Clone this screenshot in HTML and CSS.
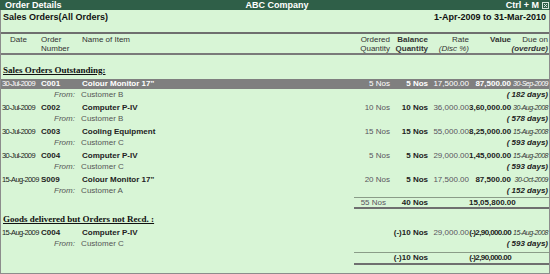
FILE: index.html
```html
<!DOCTYPE html>
<html lang="en">
<head>
    <meta charset="UTF-8">
    <title>Order Details</title>
    <link rel="stylesheet" href="styles.css">
</head>
<body>
    <div class="window">
        <div class="titlebar">
            <span class="tb-left">Order Details</span>
            <span class="tb-center">ABC Company</span>
            <span class="tb-right">Ctrl + M
                <span class="close-box">
                    <svg width="7" height="7" viewBox="0 0 7 7"><rect x="0.5" y="0.5" width="6" height="6" fill="none" stroke="#d6e6dc"/><path d="M2 2 L5 5 M5 2 L2 5" stroke="#d6e6dc" stroke-width="1"/></svg>
                </span>
            </span>
        </div>

        <div class="pane">
            <div class="subhead">
                <span>Sales Orders(All Orders)</span>
                <span>1-Apr-2009 to 31-Mar-2010</span>
            </div>

            <div class="row colhead">
                <div class="date-head">Date</div>
                <div>Order<br>Number</div>
                <div class="item">Name of Item</div>
                <div class="num">Ordered<br>Quantity</div>
                <div class="num bold">Balance<br>Quantity</div>
                <div class="num">Rate<br><i>(Disc %)</i></div>
                <div class="num bold">Value</div>
                <div class="num">Due on<br><b><i>(overdue)</i></b></div>
            </div>

            <div class="section">Sales Orders Outstanding:</div>

            <div class="entry">
                <div class="row main selected">
                    <div class="date">30-Jul-2009</div>
                    <div class="ono">C001</div>
                    <div class="item">Colour Monitor 17"</div>
                    <div class="num muted">5 Nos</div>
                    <div class="num bold">5 Nos</div>
                    <div class="num muted">17,500.00</div>
                    <div class="num bold">87,500.00</div>
                    <div class="num due">30-Sep-2009</div>
                </div>
                <div class="row sub">
                    <div class="from"><i>From:</i> Customer B</div>
                    <div class="days">( 182 days)</div>
                </div>
            </div>

            <div class="entry">
                <div class="row main">
                    <div class="date">30-Jul-2009</div>
                    <div class="ono">C002</div>
                    <div class="item">Computer P-IV</div>
                    <div class="num muted">10 Nos</div>
                    <div class="num bold">10 Nos</div>
                    <div class="num muted">36,000.00</div>
                    <div class="num bold">3,60,000.00</div>
                    <div class="num due">30-Aug-2008</div>
                </div>
                <div class="row sub">
                    <div class="from"><i>From:</i> Customer B</div>
                    <div class="days">( 578 days)</div>
                </div>
            </div>

            <div class="entry">
                <div class="row main">
                    <div class="date">30-Jul-2009</div>
                    <div class="ono">C003</div>
                    <div class="item">Cooling Equipment</div>
                    <div class="num muted">15 Nos</div>
                    <div class="num bold">15 Nos</div>
                    <div class="num muted">55,000.00</div>
                    <div class="num bold">8,25,000.00</div>
                    <div class="num due">15-Aug-2008</div>
                </div>
                <div class="row sub">
                    <div class="from"><i>From:</i> Customer C</div>
                    <div class="days">( 593 days)</div>
                </div>
            </div>

            <div class="entry">
                <div class="row main">
                    <div class="date">30-Jul-2009</div>
                    <div class="ono">C004</div>
                    <div class="item">Computer P-IV</div>
                    <div class="num muted">5 Nos</div>
                    <div class="num bold">5 Nos</div>
                    <div class="num muted">29,000.00</div>
                    <div class="num bold">1,45,000.00</div>
                    <div class="num due">15-Aug-2008</div>
                </div>
                <div class="row sub">
                    <div class="from"><i>From:</i> Customer C</div>
                    <div class="days">( 593 days)</div>
                </div>
            </div>

            <div class="entry last">
                <div class="row main">
                    <div class="date">15-Aug-2009</div>
                    <div class="ono">S009</div>
                    <div class="item">Colour Monitor 17"</div>
                    <div class="num muted">20 Nos</div>
                    <div class="num bold">5 Nos</div>
                    <div class="num muted">17,500.00</div>
                    <div class="num bold">87,500.00</div>
                    <div class="num due">30-Oct-2009</div>
                </div>
                <div class="row sub">
                    <div class="from"><i>From:</i> Customer A</div>
                    <div class="days">( 152 days)</div>
                </div>
            </div>

            <div class="totals">
                <div class="num muted pad">55 Nos</div>
                <div class="num bold">40 Nos</div>
                <div></div>
                <div class="num bold">15,05,800.00</div>
                <div></div>
            </div>

            <div class="section second">Goods delivered but Orders not Recd. :</div>

            <div class="entry last">
                <div class="row main">
                    <div class="date">15-Aug-2009</div>
                    <div class="ono">C004</div>
                    <div class="item">Computer P-IV</div>
                    <div></div>
                    <div class="num bold">(-)10 Nos</div>
                    <div class="num muted">29,000.00</div>
                    <div class="num bold narrow">(-)2,90,000.00</div>
                    <div class="num due">15-Aug-2008</div>
                </div>
                <div class="row sub">
                    <div class="from"><i>From:</i> Customer C</div>
                    <div class="days">( 593 days)</div>
                </div>
            </div>

            <div class="totals second">
                <div></div>
                <div class="num bold">(-)10 Nos</div>
                <div></div>
                <div class="num bold narrow">(-)2,90,000.00</div>
                <div></div>
            </div>
        </div>
    </div>
</body>
</html>
```

FILE: styles.css
```css
body {
    margin: 0;
    font-family: "Liberation Sans", Arial, sans-serif;
    font-size: 8px;
    color: #222;
}

.window {
    width: 550px;
    height: 274px;
    display: flex;
    flex-direction: column;
    background-color: #d8f5d6;
}

.titlebar {
    height: 10px;
    line-height: 10px;
    background-color: #2f5f48;
    color: #ffffff;
    font-size: 9px;
    font-weight: bold;
    display: grid;
    grid-template-columns: 1fr auto 1fr;
    padding: 0 1px 0 5px;
}

.tb-right {
    text-align: right;
    display: flex;
    justify-content: flex-end;
    align-items: center;
    gap: 3px;
}

.close-box svg {
    display: block;
}

.pane {
    flex: 1;
    border: 1px solid #8c8c8c;
    border-top: none;
}

.subhead {
    height: 22px;
    display: flex;
    justify-content: space-between;
    font-size: 9px;
    font-weight: bold;
    line-height: 11px;
    padding: 2px 3px 0 2px;
    box-sizing: border-box;
    color: #111;
}

.row {
    display: grid;
    grid-template-columns: 39px 40px 1fr 36px 38px 41px 42px 37px;
    padding: 0 1px;
}

.colhead {
    border-top: 2px solid #6f6f6f;
    border-bottom: 2px solid #7a7a7a;
    padding-top: 1px;
    line-height: 9px;
    color: #333;
}

.date-head {
    padding-left: 8px;
}

.item {
    padding-left: 1px;
}

.num {
    text-align: right;
    white-space: nowrap;
}

.bold {
    font-weight: bold;
}

.muted {
    color: #58545e;
}

.section {
    margin: 10px 0 3px 2px;
    font-family: "Liberation Serif", "Times New Roman", serif;
    font-size: 9px;
    font-weight: bold;
    line-height: 11px;
    text-decoration: underline;
    color: #111;
}

.section.second {
    margin-top: 5px;
}

.entry {
    margin-bottom: 3px;
}

.entry.last {
    margin-bottom: 1px;
}

.main {
    height: 10px;
    line-height: 10px;
}

.main .item,
.main .ono {
    font-weight: bold;
    font-size: 8px;
}

/* condensed look for dates and long amounts */
.date,
.due,
.narrow {
    white-space: nowrap;
    letter-spacing: -0.6px;
}

.date {
    font-size: 7.5px;
}

.due {
    font-style: italic;
    font-size: 7px;
    letter-spacing: -0.5px;
    color: #333;
}

.selected {
    background-color: #7f7f7f;
    color: #ffffff;
}

.selected .muted,
.selected .due {
    color: #ffffff;
}

.sub {
    height: 11px;
    line-height: 11px;
    color: #555;
}

.from {
    grid-column: 1 / 4;
    padding-left: 52px;
}

.from i {
    margin-right: 4px;
}

.days {
    grid-column: 6 / 9;
    text-align: right;
    font-weight: bold;
    font-style: italic;
    color: #222;
}

.totals {
    margin-left: 353px;
    margin-top: 1px;
    display: grid;
    grid-template-columns: 36px 38px 41px 42px 37px;
    padding-right: 1px;
    border-top: 1px solid #8a9c88;
    border-bottom: 2px solid #6f6f6f;
    height: 9px;
    line-height: 9px;
}

.totals.second {
    margin-top: 3px;
    height: 10px;
    line-height: 10px;
}

.pad {
    padding-right: 4px;
}
```
